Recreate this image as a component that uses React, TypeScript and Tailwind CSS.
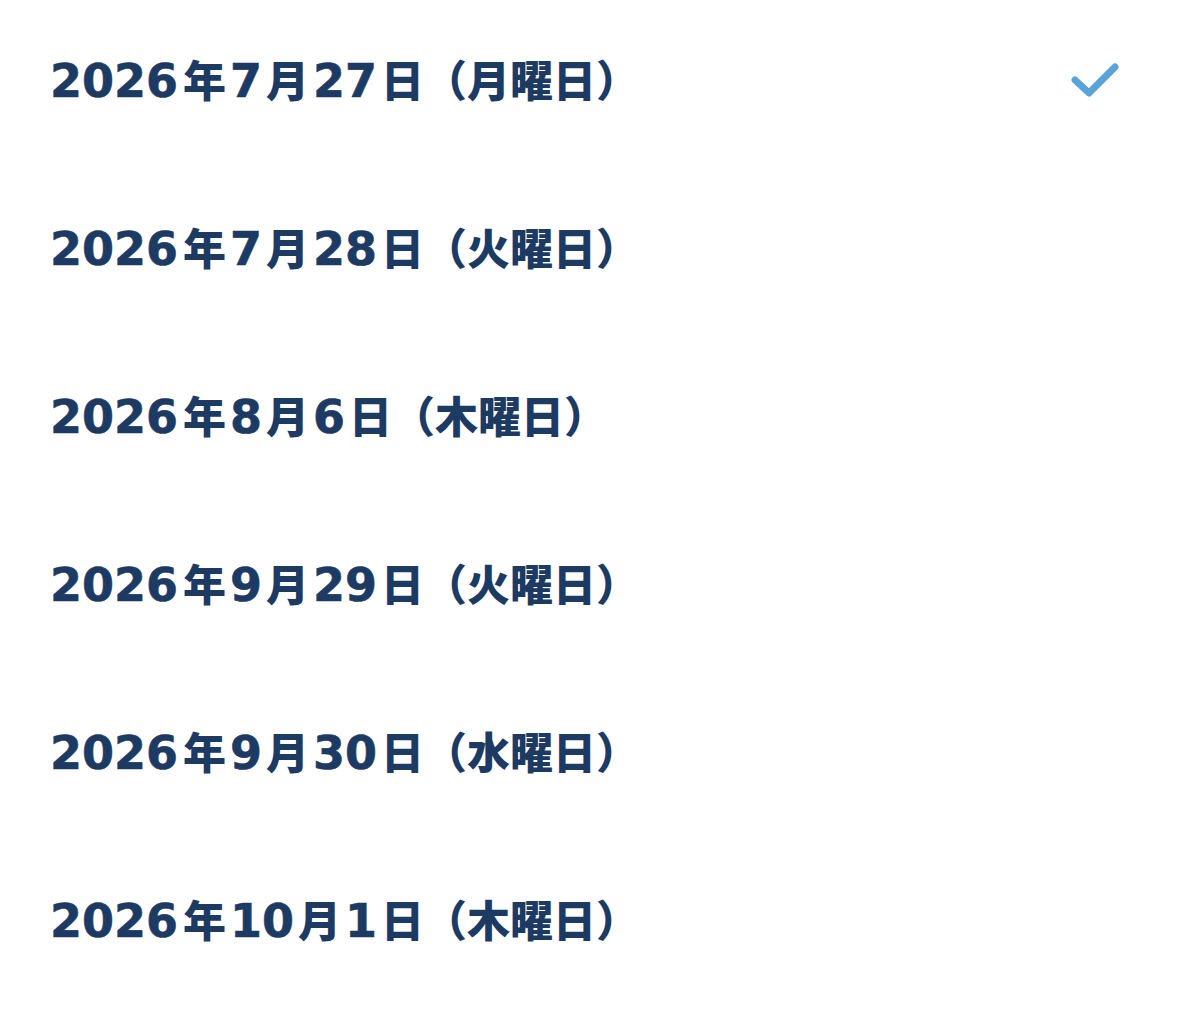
import React from "react";

const dates = [
  "2026年7月27日（月曜日）",
  "2026年7月28日（火曜日）",
  "2026年8月6日（木曜日）",
  "2026年9月29日（火曜日）",
  "2026年9月30日（水曜日）",
  "2026年10月1日（木曜日）",
];

function splitRuns(s: string) {
  return s.match(/[0-9]+|[^0-9]+/g) ?? [];
}

export default function App() {
  return (
    <div className="w-[1179px] h-[1022px] bg-white">
      {dates.map((d, i) => (
        <div key={d} className="h-[168px] flex items-center justify-between pl-[50px] pr-[60px]">
          <span className="flex items-baseline text-[#1d3a63] leading-none pb-[8px]">
            {splitRuns(d).map((r, j) =>
              /[0-9]/.test(r) ? (
                <span
                  key={j}
                  className={
                    j === 0
                      ? "text-[46px] font-bold mr-[5px] [-webkit-text-stroke:0.6px_#1d3a63]"
                      : "text-[46px] font-bold mx-[4px] [-webkit-text-stroke:0.6px_#1d3a63]"
                  }
                  style={{ fontFamily: '"DejaVu Sans", sans-serif' }}
                >
                  {r}
                </span>
              ) : (
                <span
                  key={j}
                  className="text-[43px] font-black"
                  style={{ fontFamily: '"Noto Sans CJK JP", sans-serif' }}
                >
                  {r}
                </span>
              )
            )}
          </span>
          {i === 0 && (
            <svg width="48" height="36" viewBox="0 0 48 36" className="mb-[8px]">
              <path d="M4 18 L18 31 L44 5" fill="none" stroke="#5aa3d8" strokeWidth="7" strokeLinecap="round" strokeLinejoin="round" />
            </svg>
          )}
        </div>
      ))}
    </div>
  );
}
